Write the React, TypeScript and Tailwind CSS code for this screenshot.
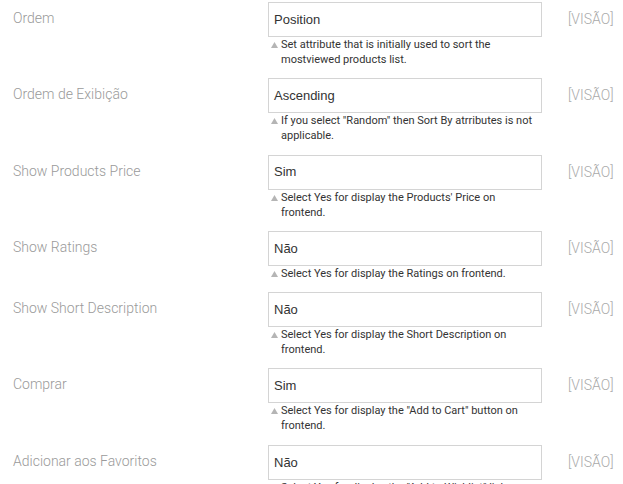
const rows = [
  {
    label: "Ordem",
    value: "Position",
    help: "Set attribute that is initially used to sort the mostviewed products list.",
  },
  {
    label: "Ordem de Exibição",
    value: "Ascending",
    help: 'If you select "Random" then Sort By atrributes is not applicable.',
  },
  {
    label: "Show Products Price",
    value: "Sim",
    help: "Select Yes for display the Products' Price on frontend.",
  },
  {
    label: "Show Ratings",
    value: "Não",
    help: "Select Yes for display the Ratings on frontend.",
  },
  {
    label: "Show Short Description",
    value: "Não",
    help: "Select Yes for display the Short Description on frontend.",
  },
  {
    label: "Comprar",
    value: "Sim",
    help: 'Select Yes for display the "Add to Cart" button on frontend.',
  },
  {
    label: "Adicionar aos Favoritos",
    value: "Não",
    help: 'Select Yes for display the "Add to Wishlist" link on frontend.',
  },
];

function HelpArrow() {
  return (
    <svg width="7" height="6" viewBox="0 0 7 6" className="absolute left-[3px] top-[5px]">
      <polygon points="3.5,0 7,6 0,6" fill="#b5b5b5" />
    </svg>
  );
}

export default function App() {
  return (
    <div className="h-[484px] overflow-hidden bg-white pt-[2px] pl-[13px] font-['Roboto',sans-serif]">
      {rows.map((row) => (
        <div key={row.label} className="flex items-start pb-[11.3px]">
          <div className="w-[255px] shrink-0 pt-[6px] text-[14px] font-light leading-[20px] text-[#9a9a9a]">
            {row.label}
          </div>
          <div className="w-[274px] shrink-0">
            <div className="flex h-[35px] items-center border border-[#d4d4d4] px-[5px] font-['Liberation_Sans',Arial,sans-serif] text-[13px] text-[#333]">
              {row.value}
            </div>
            <div className="relative pl-[13px] pr-[8px] text-[11px] leading-[15px] text-[#333]">
              <HelpArrow />
              {row.help}
            </div>
          </div>
          <div className="ml-[26px] pt-[7px] text-[14px] font-light leading-[20px] text-[#aaaaaa]">
            [VISÃO]
          </div>
        </div>
      ))}
    </div>
  );
}
